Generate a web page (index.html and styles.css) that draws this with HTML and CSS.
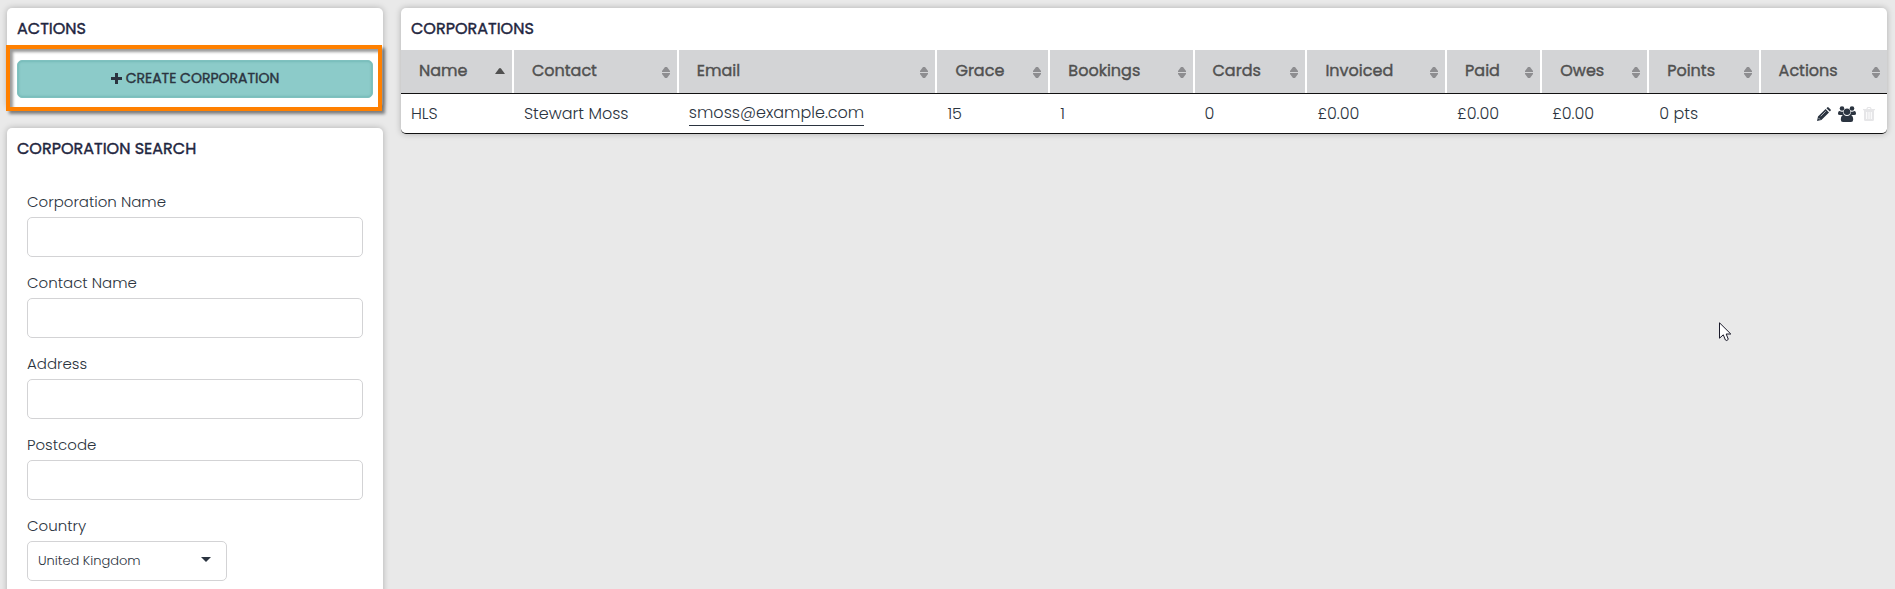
FILE: index.html
```html
<!DOCTYPE html>
<html lang="en">
<head>
    <meta charset="UTF-8">
    <meta name="viewport" content="width=device-width, initial-scale=1.0">
    <title>Corporations</title>
    <link rel="stylesheet" href="styles.css">
</head>
<body>
    <svg class="sprite" aria-hidden="true">
        <symbol id="sort" viewBox="0 0 8 11">
            <path d="M0 5 V4 L3 0 H5 L8 4 V5 Z M0 6 H8 V7 L5 11 H3 L0 7 Z"/>
        </symbol>
        <symbol id="sort-up" viewBox="0 0 10 6">
            <path d="M0 6 L4 0.5 Q5 -0.4 6 0.5 L10 6 Z"/>
        </symbol>
    </svg>

    <div class="layout">
        <aside class="sidebar">
            <section class="panel actions">
                <h2>ACTIONS</h2>
                <div class="highlight">
                    <button type="button" class="create-btn">
                        <svg viewBox="0 0 11 11" width="11" height="11"><path d="M4 0h3v4h4v3H7v4H4V7H0V4h4z"/></svg>
                        CREATE CORPORATION
                    </button>
                </div>
            </section>

            <section class="panel search">
                <h2>CORPORATION SEARCH</h2>
                <form>
                    <div class="field">
                        <label for="corporation-name">Corporation Name</label>
                        <input type="text" id="corporation-name">
                    </div>
                    <div class="field">
                        <label for="contact-name">Contact Name</label>
                        <input type="text" id="contact-name">
                    </div>
                    <div class="field">
                        <label for="address">Address</label>
                        <input type="text" id="address">
                    </div>
                    <div class="field">
                        <label for="postcode">Postcode</label>
                        <input type="text" id="postcode">
                    </div>
                    <div class="field">
                        <label for="country">Country</label>
                        <div class="select-wrap">
                            <select id="country">
                                <option>United Kingdom</option>
                            </select>
                            <svg viewBox="0 0 10 5" width="10" height="5"><path d="M0 0h10L5 5z"/></svg>
                        </div>
                    </div>
                </form>
            </section>
        </aside>

        <main class="panel results">
            <h2>CORPORATIONS</h2>
            <table>
                <colgroup>
                    <col class="col-name">
                    <col class="col-contact">
                    <col class="col-email">
                    <col class="col-grace">
                    <col class="col-bookings">
                    <col class="col-cards">
                    <col class="col-invoiced">
                    <col class="col-paid">
                    <col class="col-owes">
                    <col class="col-points">
                    <col class="col-actions">
                </colgroup>
                <thead>
                    <tr>
                        <th><div class="head sorted">Name <svg><use href="#sort-up"/></svg></div></th>
                        <th><div class="head">Contact <svg><use href="#sort"/></svg></div></th>
                        <th><div class="head">Email <svg><use href="#sort"/></svg></div></th>
                        <th><div class="head">Grace <svg><use href="#sort"/></svg></div></th>
                        <th><div class="head">Bookings <svg><use href="#sort"/></svg></div></th>
                        <th><div class="head">Cards <svg><use href="#sort"/></svg></div></th>
                        <th><div class="head">Invoiced <svg><use href="#sort"/></svg></div></th>
                        <th><div class="head">Paid <svg><use href="#sort"/></svg></div></th>
                        <th><div class="head">Owes <svg><use href="#sort"/></svg></div></th>
                        <th><div class="head">Points <svg><use href="#sort"/></svg></div></th>
                        <th><div class="head">Actions <svg><use href="#sort"/></svg></div></th>
                    </tr>
                </thead>
                <tbody>
                    <tr>
                        <td>HLS</td>
                        <td>Stewart Moss</td>
                        <td><a class="email" href="mailto:smoss@example.com">smoss@example.com</a></td>
                        <td>15</td>
                        <td>1</td>
                        <td>0</td>
                        <td>£0.00</td>
                        <td>£0.00</td>
                        <td>£0.00</td>
                        <td>0 pts</td>
                        <td>
                            <div class="row-actions">
                                <button type="button" aria-label="Edit">
                                    <svg viewBox="0 0 14 14" width="14" height="14">
                                        <path d="M0 14 L1 9.6 L8.6 2 L12 5.4 L4.4 13 Z M9.4 1.2 L10.2 0.4 Q10.9 -0.2 11.6 0.4 L13.6 2.4 Q14.2 3.1 13.6 3.8 L12.8 4.6 Z"/>
                                        <path class="cut" d="M1.5 11 L3 12.5 M3.7 9.3 L8.8 4.2"/>
                                    </svg>
                                </button>
                                <button type="button" aria-label="Members">
                                    <svg viewBox="0 0 18 16" width="18" height="16">
                                        <circle cx="4" cy="2.5" r="2.3"/>
                                        <circle cx="14" cy="2.5" r="2.3"/>
                                        <path d="M0 8 Q0 5 1.6 5 Q4 6.3 5.4 5.2 Q5 8 6.3 9 H2 Q0 9 0 8 Z M18 8 Q18 5 16.4 5 Q14 6.3 12.6 5.2 Q13 8 11.7 9 H16 Q18 9 18 8 Z"/>
                                        <circle cx="9" cy="5.8" r="3.2"/>
                                        <path d="M2.8 13.5 Q2.8 9.2 5.8 8.7 Q9 11.2 12.2 8.7 Q15.2 9.2 15.2 13.5 Q15.2 16 13 16 H5 Q2.8 16 2.8 13.5 Z"/>
                                    </svg>
                                </button>
                                <button type="button" aria-label="Delete" disabled>
                                    <svg viewBox="0 0 12 14" width="12" height="14">
                                        <path d="M0 2 H3.3 L4 0.5 Q4.2 0 4.8 0 H7.2 Q7.8 0 8 0.5 L8.7 2 H12 V3.2 H11 V12.5 Q11 14 9.6 14 H2.4 Q1 14 1 12.5 V3.2 H0 Z M4.6 2 H7.4 L7 1 H5 Z"/>
                                        <path class="cut" d="M3.7 5 V12 M6 5 V12 M8.3 5 V12"/>
                                    </svg>
                                </button>
                            </div>
                        </td>
                    </tr>
                </tbody>
            </table>
        </main>
    </div>

    <svg class="cursor" viewBox="0 0 13 20" width="13" height="20" aria-hidden="true">
        <path d="M0.5 0.8 V16.2 L4.3 12.8 L6.4 18 Q7.8 19.4 9.3 17.3 L7.2 12 H11.8 Z"/>
    </svg>
</body>
</html>
```
FILE: styles.css
```css
* {
    box-sizing: border-box;
}

body {
    margin: 0;
    background: #e9e9e9;
    color: #2b3440;
    font-family: Poppins, Inter, sans-serif;
    font-size: 16px;
    font-weight: 300;
    line-height: 24px;
}

button, input, select {
    font: inherit;
    color: inherit;
}

.sprite {
    display: none;
}

.layout {
    display: grid;
    grid-template-columns: 20% 1fr;
    gap: 18px;
    align-items: start;
    padding: 8px 8px 0 7px;
}

.sidebar {
    display: grid;
    gap: 20px;
}

.panel {
    background: #fff;
    border-radius: 5px;
    box-shadow: 0 0 6px rgba(0, 0, 0, 0.25);
}

h2 {
    margin: 0;
    padding: 9px 10px;
    color: #1f2640;
    font-size: 16px;
    font-weight: 400;
    line-height: 24px;
}

/* regular weight thickened a little */
h2, th, .create-btn {
    -webkit-text-stroke: 0.4px currentColor;
}

/* Create button with its orange outline */
.actions {
    height: 100px;
}

.highlight {
    margin: -5px 1px 0 -1px;
    padding: 11px 5px 9px 7px;
    border: 4px solid #ff8000;
    box-shadow: 3px 3px 3px rgba(0, 0, 0, 0.45), inset 3px 3px 3px rgba(0, 0, 0, 0.4);
}

.create-btn {
    display: flex;
    align-items: center;
    justify-content: center;
    gap: 4px;
    width: 100%;
    height: 38px;
    padding: 0 6px 2px;
    border: 1px solid #7fc1bf;
    border-radius: 5px;
    background: #8ccbc9;
    box-shadow: inset 0 0 3px #5fa9a7;
    color: #2b3440;
    font-size: 14px;
    font-weight: 400;
    cursor: pointer;
}

svg {
    fill: currentColor;
}

/* Search form */
.search form {
    padding: 20px 20px 14px;
}

.field {
    margin-bottom: 14px;
}

.field label {
    display: block;
    margin-bottom: 3px;
    font-size: 15px;
}

.field input, .field select {
    display: block;
    width: 100%;
    height: 40px;
    padding: 0 10px;
    border: 1px solid #d3d3d5;
    border-radius: 5px;
    background: #fff;
}

.select-wrap {
    position: relative;
    width: 200px;
}

.field select {
    appearance: none;
    font-size: 13px;
}

.select-wrap svg {
    position: absolute;
    top: 16px;
    right: 16px;
    pointer-events: none;
}

/* Results table */
table {
    width: 100%;
    table-layout: fixed;
    border-collapse: separate;
    border-spacing: 0;
}

.col-name, .col-cards { width: 7.6%; }
.col-contact { width: 11.1%; }
.col-email { width: 17.4%; }
.col-grace { width: 7.6%; }
.col-bookings { width: 9.7%; }
.col-invoiced { width: 9.4%; }
.col-paid { width: 6.4%; }
.col-owes { width: 7.2%; }
.col-points { width: 7.5%; }
.col-actions { width: 8.5%; }

th {
    padding: 0;
    border-bottom: 1px solid #111;
    background: #d3d4d6;
    color: #505050;
    font-weight: 400;
    text-align: left;
}

.head {
    display: flex;
    align-items: center;
    justify-content: space-between;
    height: 43px;
    padding: 0 7px 2px 18px;
    border-right: 2px solid #fff;
}

th:last-child .head {
    border-right: 0;
}

.head svg {
    flex: none;
    width: 8px;
    height: 11px;
    margin-top: 4px;
    color: #8d8d90;
}

.head.sorted svg {
    width: 10px;
    height: 6px;
    margin-top: 0;
    color: #505050;
}

td {
    height: 40px;
    padding: 0 10px;
    border-bottom: 1px solid #111;
    white-space: nowrap;
}

tbody td:first-child {
    border-bottom-left-radius: 5px;
}

tbody td:last-child {
    border-bottom-right-radius: 5px;
}

.email {
    display: inline-block;
    border-bottom: 1px solid #2b3440;
    color: inherit;
    text-decoration: none;
    vertical-align: bottom;
}

.row-actions {
    display: flex;
    align-items: center;
    justify-content: flex-end;
    gap: 7px;
    padding-right: 2px;
}

.row-actions button {
    display: flex;
    padding: 0;
    border: 0;
    background: none;
    cursor: pointer;
}

.row-actions button:disabled {
    color: #e6e6e8;
    cursor: default;
}

.cut {
    fill: none;
    stroke: #fff;
    stroke-width: 1;
}

.row-actions button:first-child .cut {
    stroke-width: 0.6;
}

.cursor {
    position: absolute;
    top: 322px;
    right: 163px;
    fill: #fff;
    stroke: #1a1a2a;
    pointer-events: none;
}
```
